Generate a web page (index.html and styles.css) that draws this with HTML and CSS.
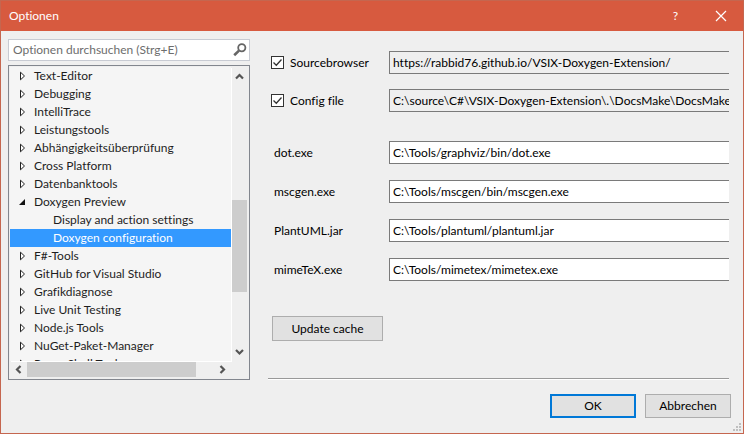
FILE: index.html
```html
<!DOCTYPE html>
<html lang="de">
<head>
<meta charset="utf-8">
<title>Optionen</title>
<link rel="stylesheet" href="styles.css">
</head>
<body>
<svg width="0" height="0" class="defs" aria-hidden="true">
  <symbol id="closed" viewBox="0 0 8 10"><path d="M1.5 1.2v7.6L5.5 5z" fill="#fff" stroke="#222"/></symbol>
  <symbol id="open" viewBox="0 0 8 10"><path d="M6 2v6H0z" fill="#111"/></symbol>
</svg>
<main class="dialog">
  <header class="titlebar">
    <h1 class="title">Optionen</h1>
    <button class="caption" type="button" aria-label="Hilfe">?</button>
    <button class="caption" type="button" aria-label="Schließen">
      <svg width="12" height="12" viewBox="0 0 12 12"><path d="M1 1l10 10M11 1L1 11" stroke="#fff" stroke-width="1.2" fill="none"/></svg>
    </button>
  </header>

  <div class="content">
    <aside class="sidebar">
      <div class="search">
        <input class="search-input" type="text" aria-label="Optionen durchsuchen" placeholder="Optionen durchsuchen (Strg+E)">
        <svg class="search-icon" width="14" height="14" viewBox="0 0 14 14"><circle cx="8.8" cy="4.8" r="3.6" fill="none" stroke="#666" stroke-width="1.8"/><path d="M6 7.6L1.2 12.2" stroke="#666" stroke-width="2.6"/></svg>
      </div>
      <nav class="tree" aria-label="Kategorien">
        <ul class="items">
          <li><button class="item" type="button"><svg class="arrow"><use href="#closed"/></svg>Text-Editor</button></li>
          <li><button class="item" type="button"><svg class="arrow"><use href="#closed"/></svg>Debugging</button></li>
          <li><button class="item" type="button"><svg class="arrow"><use href="#closed"/></svg>IntelliTrace</button></li>
          <li><button class="item" type="button"><svg class="arrow"><use href="#closed"/></svg>Leistungstools</button></li>
          <li><button class="item" type="button"><svg class="arrow"><use href="#closed"/></svg>Abhängigkeitsüberprüfung</button></li>
          <li><button class="item" type="button"><svg class="arrow"><use href="#closed"/></svg>Cross Platform</button></li>
          <li><button class="item" type="button"><svg class="arrow"><use href="#closed"/></svg>Datenbanktools</button></li>
          <li><button class="item" type="button"><svg class="arrow"><use href="#open"/></svg>Doxygen Preview</button>
            <ul class="subitems">
              <li><button class="item child" type="button">Display and action settings</button></li>
              <li><button class="item child selected" type="button">Doxygen configuration</button></li>
            </ul>
          </li>
          <li><button class="item" type="button"><svg class="arrow"><use href="#closed"/></svg>F#-Tools</button></li>
          <li><button class="item" type="button"><svg class="arrow"><use href="#closed"/></svg>GitHub for Visual Studio</button></li>
          <li><button class="item" type="button"><svg class="arrow"><use href="#closed"/></svg>Grafikdiagnose</button></li>
          <li><button class="item" type="button"><svg class="arrow"><use href="#closed"/></svg>Live Unit Testing</button></li>
          <li><button class="item" type="button"><svg class="arrow"><use href="#closed"/></svg>Node.js Tools</button></li>
          <li><button class="item" type="button"><svg class="arrow"><use href="#closed"/></svg>NuGet-Paket-Manager</button></li>
          <li><button class="item" type="button"><svg class="arrow"><use href="#closed"/></svg>PowerShell Tools</button></li>
        </ul>
        <div class="vscroll">
          <svg class="step" width="15" height="18" viewBox="0 0 15 18"><path d="M4 11.5L7.5 8l3.500 3.500" fill="none" stroke="#555" stroke-width="2.2"/></svg>
          <div class="vtrack"><div class="vthumb"></div></div>
          <svg class="step" width="15" height="18" viewBox="0 0 15 18"><path d="M4 7l3.500 3.500L11 7" fill="none" stroke="#555" stroke-width="2.2"/></svg>
        </div>
        <div class="hscroll">
          <svg class="step" width="17" height="15" viewBox="0 0 17 15"><path d="M10.500 4L7 7.500l3.500 3.500" fill="none" stroke="#555" stroke-width="2.2"/></svg>
          <div class="htrack"><div class="hthumb"></div></div>
          <svg class="step" width="17" height="15" viewBox="0 0 17 15"><path d="M6.500 4L10 7.500 6.500 11" fill="none" stroke="#555" stroke-width="2.2"/></svg>
        </div>
      </nav>
    </aside>

    <form class="page" id="options">
      <div class="group">
        <div class="row">
          <label class="check"><input class="box" type="checkbox" checked>Sourcebrowser</label>
          <input class="field readonly" type="text" aria-label="Sourcebrowser URL" readonly value="https://rabbid76.github.io/VSIX-Doxygen-Extension/">
        </div>
        <div class="row">
          <label class="check"><input class="box" type="checkbox" checked>Config file</label>
          <input class="field readonly" type="text" aria-label="Config file path" readonly value="C:\source\C#\VSIX-Doxygen-Extension\.\DocsMake\DocsMake.txt">
        </div>
      </div>
      <div class="group paths">
        <div class="row">
          <label class="name" for="dot">dot.exe</label>
          <input class="field" id="dot" type="text" value="C:\Tools/graphviz/bin/dot.exe">
        </div>
        <div class="row">
          <label class="name" for="mscgen">mscgen.exe</label>
          <input class="field" id="mscgen" type="text" value="C:\Tools/mscgen/bin/mscgen.exe">
        </div>
        <div class="row">
          <label class="name" for="plantuml">PlantUML.jar</label>
          <input class="field" id="plantuml" type="text" value="C:\Tools/plantuml/plantuml.jar">
        </div>
        <div class="row">
          <label class="name" for="mimetex">mimeTeX.exe</label>
          <input class="field" id="mimetex" type="text" value="C:\Tools/mimetex/mimetex.exe">
        </div>
      </div>
      <button class="button update" type="button">Update cache</button>
    </form>
  </div>

  <footer class="footer">
    <button class="button primary" type="submit" form="options">OK</button>
    <button class="button" type="button">Abbrechen</button>
    <svg class="grip" width="8" height="8" viewBox="0 0 8 8"><path d="M6 0h2v2H6zM3 3h2v2H3zM6 3h2v2H6zM0 6h2v2H0zM3 6h2v2H3zM6 6h2v2H6z" fill="#bfbfbf"/></svg>
  </footer>
</main>
</body>
</html>
```
FILE: styles.css
```css
* {
  box-sizing: border-box;
}

body {
  margin: 0;
  font: 12px/18px Lato, "Open Sans", sans-serif;
  font-variant-ligatures: none;
  color: #000;
}

button,
input {
  font: inherit;
  font-variant-ligatures: none;
  color: inherit;
}

ul {
  margin: 0;
  padding: 0;
  list-style: none;
}

.defs {
  position: absolute;
}

.dialog {
  position: relative;
  display: flex;
  flex-direction: column;
  min-height: 100vh;
  border: 1px solid #c5664f;
  background: #efefef;
}

.titlebar {
  display: flex;
  align-items: center;
  height: 30px;
  padding-left: 8px;
  background: #d75a3f;
  color: #fff;
}

.title {
  flex: 1;
  margin: 0;
  font-size: 12px;
  font-weight: 400;
}

.caption {
  display: flex;
  align-items: center;
  justify-content: center;
  width: 45px;
  height: 30px;
  padding: 0;
  border: 0;
  background: none;
}

.content {
  flex: 1;
  display: flex;
  gap: 18px;
  padding: 8px 14px 0 7px;
}

.sidebar {
  display: flex;
  flex: 0 0 242px;
  flex-direction: column;
  gap: 4px;
}

.search {
  display: flex;
  align-items: center;
  height: 22px;
  padding-right: 2px;
  border: 1px solid #c8cbd3;
  background: #fff;
}

.search-input {
  flex: 1;
  min-width: 0;
  padding: 0 4px;
  border: 0;
  background: none;
  outline: 0;
}

.search-input::placeholder {
  color: #6d6d6d;
  opacity: 1;
}

.tree {
  display: grid;
  flex: 1;
  grid-template-columns: 1fr 15px;
  grid-template-rows: minmax(0, 1fr) 15px;
  gap: 1px;
  min-height: 0;
  padding: 1px 2px 2px 1px;
  border: 1px solid #82868e;
}

.items {
  height: 0;
  min-height: 100%;
  overflow: hidden;
  background: #f5f5f5;
  box-shadow: 1px 1px #fff;
  color: #1e1e1e;
}

.item {
  display: flex;
  align-items: center;
  width: 100%;
  height: 18px;
  padding: 0 0 0 9px;
  border: 0;
  background: none;
  white-space: nowrap;
}

.arrow {
  width: 8px;
  height: 10px;
  margin-right: 7px;
}

.child {
  padding-left: 43px;
}

.selected {
  background: #3399ff;
  color: #fff;
}

.vscroll {
  display: flex;
  flex-direction: column;
}

.vtrack {
  display: grid;
  flex: 1;
  grid-template-rows: 115fr 92fr 51fr;
}

.vthumb {
  grid-row: 2;
  background: #cdcdcd;
}

.hscroll {
  display: flex;
}

.htrack {
  display: grid;
  flex: 1;
  grid-template-columns: 169fr 18fr;
}

.hthumb {
  background: #cdcdcd;
}

.step {
  display: block;
  flex: none;
}

.page {
  flex: 1;
  min-width: 0;
  margin-bottom: 1px;
  padding: 12px 0 36px;
  border-bottom: 1px solid #999;
  box-shadow: 0 1px #fff;
}

.group {
  display: grid;
  gap: 15px;
}

.paths {
  gap: 16px;
  margin: 29px 0 35px;
}

.row {
  display: grid;
  grid-template-columns: 121px minmax(0, 1fr);
  align-items: center;
}

.check {
  display: flex;
  align-items: center;
  gap: 6px;
  padding-left: 3px;
}

.box {
  width: 13px;
  height: 13px;
  margin: 0;
  border: 1px solid #333;
  appearance: none;
  background: #fff;
}

.box:checked {
  background: #fff url("data:image/svg+xml,%3Csvg xmlns='http://www.w3.org/2000/svg' viewBox='0 0 11 11'%3E%3Cpath d='M1.500 5.500l2.800 2.800 5.200-5.800' fill='none' stroke='%23333' stroke-width='1.300'/%3E%3C/svg%3E");
}

.name {
  padding-left: 6px;
}

.field {
  width: 100%;
  height: 23px;
  padding: 0 0 0 3px;
  border: 1px solid #7a7a7a;
  border-right: 0;
  border-radius: 0;
  outline: 0;
  background: #fff;
}

.readonly {
  background: #efefef;
}

.button {
  width: 86px;
  height: 24px;
  padding: 0;
  border: 1px solid #adadad;
  background: #e1e1e1;
}

.update {
  display: block;
  width: 111px;
  height: 25px;
  margin-left: 4px;
}

.primary {
  border: 2px solid #0078d7;
}

.footer {
  display: flex;
  justify-content: flex-end;
  gap: 9px;
  padding: 14px 12px 15px;
}

.grip {
  position: absolute;
  right: 2px;
  bottom: 2px;
}
```
